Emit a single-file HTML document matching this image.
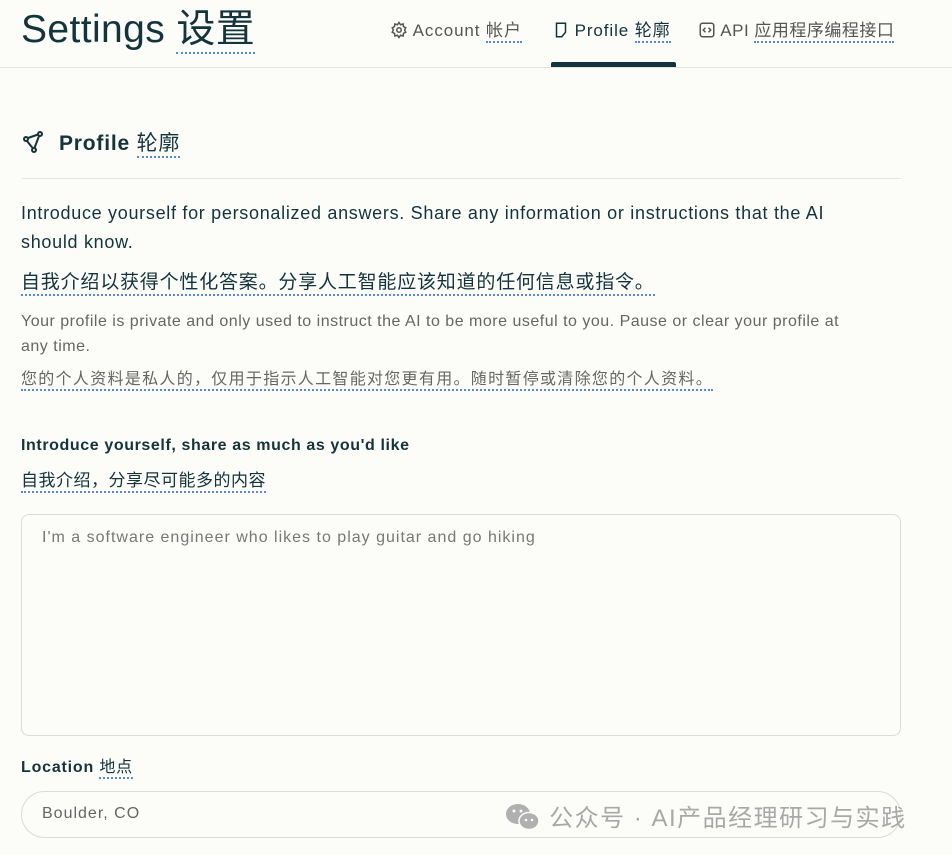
<!DOCTYPE html>
<html><head><meta charset="utf-8"><style>
*{margin:0;padding:0;box-sizing:border-box}
body{width:952px;height:855px;overflow:hidden;background:#fcfcf9;font-family:"Liberation Sans","Noto Sans CJK SC",sans-serif;color:#13343b;position:relative}
.a{position:absolute;white-space:nowrap}
.u{border-bottom:2px dotted #5b86e0;padding-bottom:1px}
</style></head><body>
<div class="a" style="left:21px;top:7px;font-size:39px;line-height:46px;letter-spacing:0.4px;color:#13343b">Settings <span class="u">设置</span></div>
<div class="a" style="left:390px;top:20px;font-size:17px;line-height:22px;letter-spacing:0.9px;color:#555">
<svg width="18" height="18" viewBox="0 0 24 24" style="vertical-align:-3px" fill="none" stroke="#555" stroke-width="2"><circle cx="12" cy="12" r="3"/><path d="M12 2l2 3 3.5-1 .5 3.5 3 1.5-1.5 3 1.5 3-3 1.5-.5 3.5-3.5-1-2 3-2-3-3.5 1-.5-3.5-3-1.5L4.5 12 3 9l3-1.5.5-3.5 3.5 1z"/></svg>
Account <span class="u">帐户</span></div>
<div class="a" style="left:553px;top:20px;font-size:17px;line-height:22px;letter-spacing:0.9px;color:#13343b">
<svg width="16" height="18" viewBox="0 0 20 24" style="vertical-align:-3px" fill="none" stroke="#13343b" stroke-width="2"><path d="M4 3h12v12l-5 6H4z"/></svg>
Profile <span class="u">轮廓</span></div>
<div class="a" style="left:698px;top:20px;font-size:17px;line-height:22px;letter-spacing:0.5px;color:#555">
<svg width="18" height="18" viewBox="0 0 24 24" style="vertical-align:-3px" fill="none" stroke="#555" stroke-width="2"><rect x="3" y="3" width="18" height="18" rx="3"/><path d="M10 9l-3 3 3 3M14 9l3 3-3 3"/></svg>
API <span class="u">应用程序编程接口</span></div>
<div class="a" style="left:551px;top:62px;width:125px;height:5px;background:#13343b;border-radius:2px 2px 0 0"></div>
<div class="a" style="left:0;top:67px;width:952px;height:1px;background:#e5e5e0"></div>
<div class="a" style="left:22px;top:130px;font-size:21px;line-height:28px;font-weight:bold;letter-spacing:0.8px;color:#13343b">
<svg width="24" height="24" viewBox="0 0 24 24" style="vertical-align:-4px;margin-right:13px" fill="none" stroke="#13343b" stroke-width="2"><circle cx="4" cy="9" r="2"/><circle cx="18" cy="4" r="2"/><circle cx="12" cy="20" r="2"/><path d="M6 8l10-3.5M5 11l6 7.5M17 6l-4.5 12"/></svg>Profile <span class="u" style="font-weight:normal">轮廓</span></div>
<div class="a" style="left:22px;top:178px;width:879px;height:1px;background:#e5e5e0"></div>
<div class="a" style="left:21px;top:199px;width:840px;white-space:normal;font-size:18px;line-height:29px;letter-spacing:0.7px;color:#13343b">Introduce yourself for personalized answers. Share any information or instructions that the AI should know.</div>
<div class="a" style="left:21px;top:270px;font-size:19px;line-height:25px;letter-spacing:0.8px"><span class="u">自我介绍以获得个性化答案。分享人工智能应该知道的任何信息或指令。</span></div>
<div class="a" style="left:21px;top:309px;width:845px;white-space:normal;font-size:16px;line-height:25px;letter-spacing:0.5px;color:#666">Your profile is private and only used to instruct the AI to be more useful to you. Pause or clear your profile at any time.</div>
<div class="a" style="left:21px;top:369px;font-size:16px;line-height:22px;letter-spacing:1.3px;color:#666"><span class="u">您的个人资料是私人的，仅用于指示人工智能对您更有用。随时暂停或清除您的个人资料。</span></div>
<div class="a" style="left:21px;top:435px;font-size:16px;line-height:22px;font-weight:bold;letter-spacing:0.6px;color:#13343b">Introduce yourself, share as much as you'd like</div>
<div class="a" style="left:21px;top:469px;font-size:17px;line-height:24px;letter-spacing:0.5px"><span class="u">自我介绍，分享尽可能多的内容</span></div>
<div class="a" style="left:21px;top:514px;width:880px;height:222px;border:1px solid #dcdcd6;border-radius:8px;background:#fcfcf9"></div>
<div class="a" style="left:42px;top:527px;font-size:16px;line-height:22px;letter-spacing:1px;color:#777">I'm a software engineer who likes to play guitar and go hiking</div>
<div class="a" style="left:21px;top:756px;font-size:16px;line-height:24px;font-weight:bold;letter-spacing:0.8px">Location <span class="u" style="font-weight:normal">地点</span></div>
<div class="a" style="left:21px;top:791px;width:880px;height:47px;border:1px solid #dcdcd6;border-radius:24px"></div>
<div class="a" style="left:42px;top:803px;font-size:16px;line-height:22px;letter-spacing:1px;color:#666">Boulder, CO</div>
<div class="a" style="left:505px;top:802px;font-size:24px;line-height:30px;letter-spacing:1.5px;color:#a8a8a8">
<svg width="36" height="30" viewBox="0 0 36 30" style="vertical-align:-6px"><ellipse cx="13" cy="12" rx="12" ry="10" fill="#b0b0b0"/><ellipse cx="24" cy="19" rx="10" ry="8.5" fill="#b0b0b0" stroke="#fcfcf9" stroke-width="1.5"/><circle cx="9" cy="9" r="1.5" fill="#fcfcf9"/><circle cx="16" cy="9" r="1.5" fill="#fcfcf9"/><circle cx="21" cy="18" r="1.3" fill="#fcfcf9"/><circle cx="27" cy="18" r="1.3" fill="#fcfcf9"/></svg> 公众号 · AI产品经理研习与实践</div>
</body></html>
